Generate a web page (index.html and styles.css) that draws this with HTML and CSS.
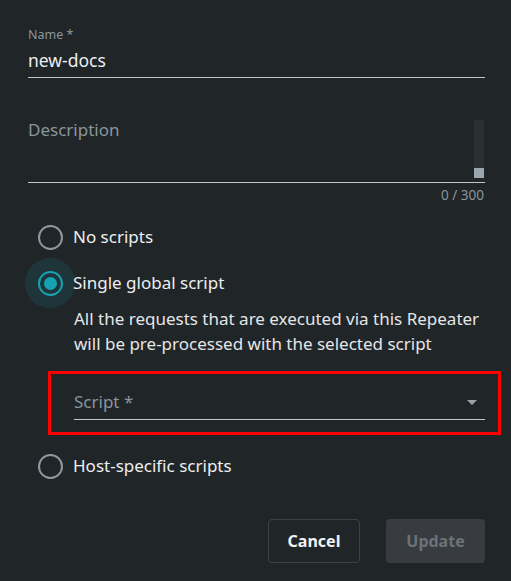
FILE: index.html
```html
<!DOCTYPE html>
<html>
<head>
<meta charset="utf-8">
<link rel="stylesheet" href="styles.css">
</head>
<body>
<form class="dialog">
  <div class="field name-field">
    <label class="small-label">Name *</label>
    <div class="value">new-docs</div>
  </div>

  <div class="field desc-field">
    <div class="desc-body">
      <span class="placeholder">Description</span>
      <div class="scrollbar"><div class="thumb"></div></div>
    </div>
  </div>
  <div class="counter">0 / 300</div>

  <div class="radios">
    <div class="radio-row">
      <span class="radio"></span>
      <span class="radio-text">No scripts</span>
    </div>
    <div class="radio-row checked">
      <span class="radio"><span class="dot"></span></span>
      <span class="radio-text">Single global script</span>
    </div>
    <p class="hint">All the requests that are executed via this Repeater will be pre-processed with the selected script</p>
    <div class="highlight">
      <div class="select">
        <span class="placeholder">Script *</span>
        <svg class="caret" width="10" height="5" viewBox="0 0 10 5"><path d="M0 0 L10 0 L5 5 Z" fill="#9aa5ad"/></svg>
      </div>
    </div>
    <div class="radio-row last">
      <span class="radio"></span>
      <span class="radio-text">Host-specific scripts</span>
    </div>
  </div>

  <div class="actions">
    <button type="button" class="btn cancel">Cancel</button>
    <button type="button" class="btn update">Update</button>
  </div>
</form>
</body>
</html>
```

FILE: styles.css
```css
html, body {
  margin: 0;
  padding: 0;
  background: #202528;
  height: 100%;
}
body {
  font-family: "Noto Sans", sans-serif;
  color: #e8eaec;
}
.dialog {
  padding: 28px 26px 0 28px;
  display: flex;
  flex-direction: column;
}
.field {
  border-bottom: 1px solid #c4c7c9;
}
.small-label {
  display: block;
  font-size: 12.5px;
  line-height: 14px;
  color: #8b959b;
}
.value {
  font-size: 17.5px;
  line-height: 22px;
  margin-top: 7px;
  padding-bottom: 6px;
  color: #eceef0;
}
.desc-field {
  margin-top: 41px;
}
.desc-body {
  display: flex;
  justify-content: space-between;
  height: 63px;
}
.placeholder {
  color: #8a959c;
  font-size: 17px;
  line-height: 22px;
}
.scrollbar {
  width: 10px;
  height: 58px;
  margin-top: 1px;
  background: #2a2f32;
  margin-right: 1px;
  display: flex;
  flex-direction: column;
  justify-content: flex-end;
}
.thumb {
  height: 10px;
  background: #9aa5ad;
}
.counter {
  align-self: flex-end;
  font-size: 13.5px;
  line-height: 16px;
  color: #8a959c;
  margin-top: 4px;
  margin-right: 1px;
}
.radios {
  margin-top: 11px;
  display: flex;
  flex-direction: column;
}
.radio-row {
  display: flex;
  align-items: center;
  height: 46px;
  margin-left: -3px;
}
.radio-row.last {
  margin-top: 8px;
}
.radio {
  position: relative;
  width: 50px;
  height: 46px;
  display: flex;
  align-items: center;
  justify-content: center;
  flex: none;
  margin-right: -2px;
}
.radio::before {
  content: "";
  width: 25px;
  height: 25px;
  border: 2px solid #8e9aa2;
  border-radius: 50%;
  box-sizing: border-box;
  position: relative;
  z-index: 1;
}
.radio-row.checked .radio::after {
  content: "";
  position: absolute;
  width: 50px;
  height: 50px;
  border-radius: 50%;
  background: rgba(24, 160, 173, 0.14);
  left: 0;
  top: -2px;
}
.radio-row.checked .radio::before {
  border-color: #16a2b0;
}
.dot {
  position: absolute;
  width: 13px;
  height: 13px;
  border-radius: 50%;
  background: #16a2b0;
  left: 18.5px;
  top: 16.5px;
  z-index: 2;
}
.radio-text {
  font-size: 17px;
  line-height: 22px;
  color: #eceef0;
}
.hint {
  margin: 0 0 0 46px;
  max-width: 414px;
  font-size: 17px;
  line-height: 25px;
  color: #e4e6e8;
}
.highlight {
  margin: 15px -16px 0 20px;
  border: 3px solid #ff0000;
  padding: 0 13px 12px 23px;
}
.select {
  display: flex;
  justify-content: space-between;
  align-items: center;
  border-bottom: 1px solid #c4c7c9;
  padding: 17px 0 6px 0;
}
.caret {
  margin-right: 8px;
}
.actions {
  display: flex;
  justify-content: flex-end;
  gap: 26px;
  margin-top: 30px;
}
.btn {
  height: 44px;
  box-sizing: border-box;
  border-radius: 4px;
  font-family: inherit;
  font-size: 16px;
  font-weight: 700;
}
.cancel {
  width: 92px;
  background: transparent;
  border: 1px solid #3d4247;
  color: #f0f2f4;
}
.update {
  width: 99px;
  background: #383c40;
  border: none;
  color: #6b7378;
}
```
